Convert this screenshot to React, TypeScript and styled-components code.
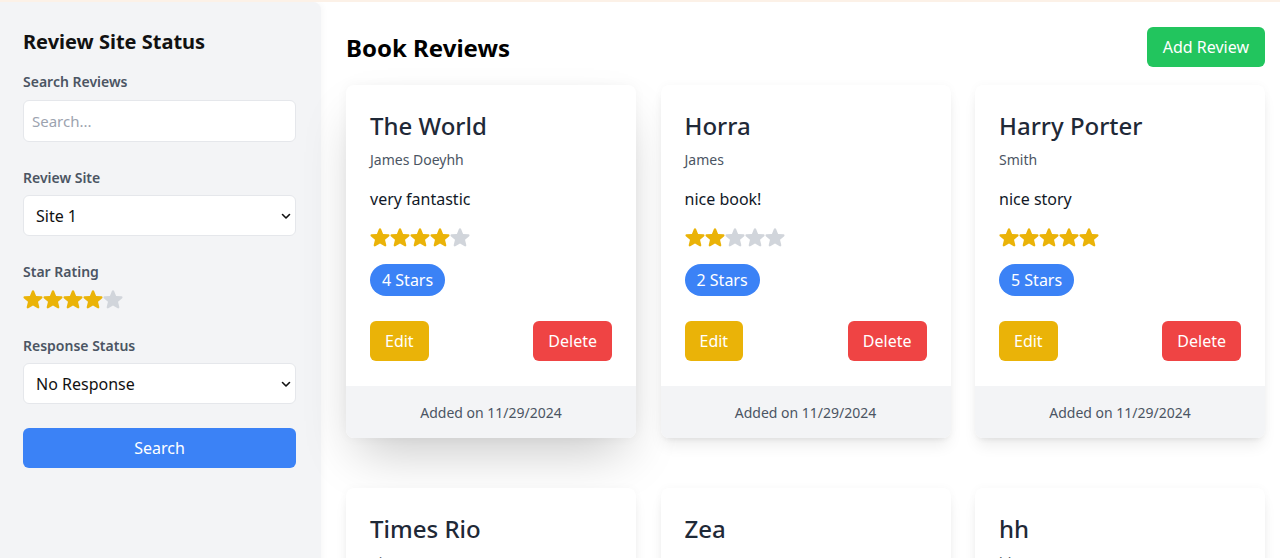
import React from "react";
import styled, { createGlobalStyle } from "styled-components";

const GlobalStyle = createGlobalStyle`
  * { box-sizing: border-box; }
  html, body { margin: 0; padding: 0; background: #ffffff; }
  body {
    font-family: "Noto Sans", "Open Sans", sans-serif;
    border-top: 2px solid #fcf1e7;
    color: #111827;
  }
`;

const Layout = styled.div`
  display: flex;
  min-height: calc(100vh - 2px);
`;

const Sidebar = styled.aside`
  width: 321px;
  flex-shrink: 0;
  background: #f3f4f6;
  border-top-right-radius: 8px;
  padding: 26px 25px 24px 23px;
  box-shadow: 2px 0 6px rgba(0, 0, 0, 0.03);
`;

const SideTitle = styled.h2`
  margin: 0 0 16px;
  font-size: 20px;
  line-height: 28px;
  font-weight: 700;
  color: #111111;
`;

const Field = styled.div<{ $gap?: number; $mb?: number }>`
  display: flex;
  flex-direction: column;
  gap: ${(p) => p.$gap ?? 7}px;
  margin-bottom: ${(p) => p.$mb ?? 26}px;
`;

const Label = styled.label`
  font-size: 14px;
  line-height: 20px;
  font-weight: 600;
  color: #4b5563;
`;

const TextInput = styled.input`
  width: 100%;
  height: 42px;
  padding: 8px 8px;
  font-family: inherit;
  font-size: 15px;
  border: 1px solid #e5e7eb;
  border-radius: 6px;
  background: #fff;
  color: #111;
  outline: none;
  &::placeholder { color: #9ca3af; }
`;

const SelectWrap = styled.div`
  position: relative;
`;

const Select = styled.select`
  width: 100%;
  height: 41px;
  padding: 6px 12px;
  font-family: inherit;
  font-size: 16px;
  color: #111;
  border: 1px solid #e5e7eb;
  border-radius: 6px;
  background: #fff;
  appearance: none;
  -webkit-appearance: none;
  outline: none;
`;

const Chevron = styled.svg`
  position: absolute;
  right: 5px;
  top: 50%;
  transform: translateY(-50%);
  width: 10px;
  height: 10px;
  pointer-events: none;
`;

const StarRow = styled.div<{ $size: number }>`
  display: flex;
  height: ${(p) => p.$size}px;
  svg { width: ${(p) => p.$size}px; height: ${(p) => p.$size}px; display: block; }
`;

const PrimaryButton = styled.button`
  width: 100%;
  height: 40px;
  border: none;
  border-radius: 6px;
  background: #3b82f6;
  color: #fff;
  font-family: inherit;
  font-size: 16px;
  cursor: pointer;
`;

const Main = styled.main`
  flex: 1;
  padding: 25px 15px 24px 25px;
  min-width: 0;
`;

const Header = styled.header`
  display: flex;
  align-items: center;
  justify-content: space-between;
  height: 40px;
  margin-bottom: 18px;
`;

const PageTitle = styled.h1`
  margin: 0;
  font-size: 24px;
  line-height: 32px;
  font-weight: 700;
  color: #000;
  position: relative;
  top: 1px;
`;

const AddButton = styled.button`
  height: 40px;
  padding: 0 16px;
  border: none;
  border-radius: 6px;
  background: #22c55e;
  color: #fff;
  font-family: inherit;
  font-size: 16px;
  cursor: pointer;
`;

const Grid = styled.div`
  display: grid;
  grid-template-columns: repeat(3, 1fr);
  column-gap: 24.5px;
  row-gap: 50px;
`;

const Card = styled.article<{ $raised?: boolean }>`
  background: #fff;
  border-radius: 8px;
  overflow: hidden;
  display: flex;
  flex-direction: column;
  box-shadow: ${(p) =>
    p.$raised
      ? "0 25px 50px -12px rgba(0,0,0,0.22), 0 0 12px rgba(0,0,0,0.04)"
      : "0 10px 15px -3px rgba(0,0,0,0.08), 0 4px 6px -4px rgba(0,0,0,0.08), 0 0 10px rgba(0,0,0,0.03)"};
`;

const CardBody = styled.div`
  padding: 25px 24px 25px 24px;
  display: flex;
  flex-direction: column;
`;

const CardTitle = styled.h3`
  margin: 0 0 8px;
  font-size: 24px;
  line-height: 32px;
  font-weight: 500;
  color: #1f2937;
`;

const Author = styled.p`
  margin: 0 0 17px;
  font-size: 14px;
  line-height: 20px;
  color: #4b5563;
`;

const Description = styled.p`
  margin: 0 0 16px;
  font-size: 16px;
  line-height: 24px;
  color: #111827;
`;

const Badge = styled.span`
  align-self: flex-start;
  margin-top: 17px;
  height: 32px;
  padding: 0 12px;
  display: inline-flex;
  align-items: center;
  border-radius: 999px;
  background: #3b82f6;
  color: #fff;
  font-size: 16px;
`;

const Actions = styled.div`
  display: flex;
  justify-content: space-between;
  margin-top: 25px;
`;

const ActionButton = styled.button<{ $tone: "edit" | "delete" }>`
  height: 40px;
  padding: 0 15px;
  border: none;
  border-radius: 6px;
  background: ${(p) => (p.$tone === "edit" ? "#eab308" : "#ef4444")};
  color: #fff;
  font-family: inherit;
  font-size: 16px;
  cursor: pointer;
`;

const CardFooter = styled.footer`
  background: #f3f4f6;
  padding: 17px 16px 15px;
  text-align: center;
  font-size: 14px;
  line-height: 20px;
  color: #4b5563;
`;

const STAR_PATH =
  "M10.868 2.884c-.321-.772-1.415-.772-1.736 0l-1.83 4.401-4.753.381c-.833.067-1.171 1.107-.536 1.651l3.62 3.102-1.106 4.637c-.194.813.691 1.456 1.405 1.02L10 15.591l4.069 2.485c.713.436 1.598-.207 1.404-1.02l-1.106-4.637 3.62-3.102c.635-.544.297-1.584-.536-1.65l-4.752-.382-1.831-4.401z";

function Stars({ value, size = 20 }: { value: number; size?: number }) {
  return (
    <StarRow $size={size}>
      {[1, 2, 3, 4, 5].map((i) => (
        <svg key={i} viewBox="1.3 1.3 17.4 17.4" aria-hidden>
          <path d={STAR_PATH} fill={i <= value ? "#eab308" : "#d1d5db"} />
        </svg>
      ))}
    </StarRow>
  );
}

function ChevronIcon() {
  return (
    <Chevron viewBox="0 0 10 10" aria-hidden>
      <path d="M1.5 3.5 L5 7 L8.5 3.5" fill="none" stroke="#111" strokeWidth="1.6" strokeLinecap="round" strokeLinejoin="round" />
    </Chevron>
  );
}

type Review = { title: string; author: string; text: string; rating: number; date: string };

const reviews: Review[] = [
  { title: "The World", author: "James Doeyhh", text: "very fantastic", rating: 4, date: "11/29/2024" },
  { title: "Horra", author: "James", text: "nice book!", rating: 2, date: "11/29/2024" },
  { title: "Harry Porter", author: "Smith", text: "nice story", rating: 5, date: "11/29/2024" },
  { title: "Times Rio", author: "Rio", text: "good read", rating: 3, date: "11/29/2024" },
  { title: "Zea", author: "Zea", text: "great", rating: 4, date: "11/29/2024" },
  { title: "hh", author: "hh", text: "hh", rating: 1, date: "11/29/2024" },
];

export default function App() {
  return (
    <>
      <GlobalStyle />
      <Layout>
        <Sidebar>
          <SideTitle>Review Site Status</SideTitle>
          <Field $gap={8}>
            <Label>Search Reviews</Label>
            <TextInput placeholder="Search..." />
          </Field>
          <Field>
            <Label>Review Site</Label>
            <SelectWrap>
              <Select defaultValue="Site 1">
                <option>Site 1</option>
                <option>Site 2</option>
              </Select>
              <ChevronIcon />
            </SelectWrap>
          </Field>
          <Field $mb={27}>
            <Label>Star Rating</Label>
            <Stars value={4} />
          </Field>
          <Field $mb={24}>
            <Label>Response Status</Label>
            <SelectWrap>
              <Select defaultValue="No Response">
                <option>No Response</option>
                <option>Responded</option>
              </Select>
              <ChevronIcon />
            </SelectWrap>
          </Field>
          <PrimaryButton>Search</PrimaryButton>
        </Sidebar>
        <Main>
          <Header>
            <PageTitle>Book Reviews</PageTitle>
            <AddButton>Add Review</AddButton>
          </Header>
          <Grid>
            {reviews.map((r, idx) => (
              <Card key={idx} $raised={idx === 0}>
                <CardBody>
                  <CardTitle>{r.title}</CardTitle>
                  <Author>{r.author}</Author>
                  <Description>{r.text}</Description>
                  <Stars value={r.rating} />
                  <Badge>{r.rating} Stars</Badge>
                  <Actions>
                    <ActionButton $tone="edit">Edit</ActionButton>
                    <ActionButton $tone="delete">Delete</ActionButton>
                  </Actions>
                </CardBody>
                <CardFooter>Added on {r.date}</CardFooter>
              </Card>
            ))}
          </Grid>
        </Main>
      </Layout>
    </>
  );
}
